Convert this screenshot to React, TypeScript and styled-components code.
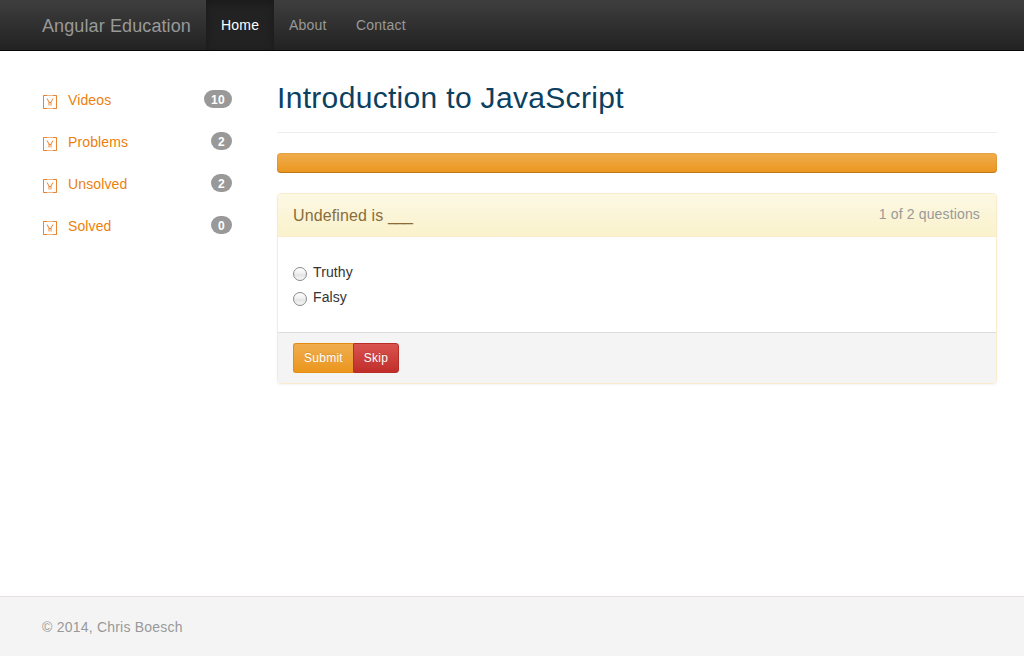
import React from 'react';
import styled, { createGlobalStyle } from 'styled-components';

const GlobalStyle = createGlobalStyle`
  *, *::before, *::after { box-sizing: border-box; }
  html, body { margin: 0; padding: 0; }
  body {
    background: #fff;
    color: #333;
    font-family: "Liberation Sans", Arial, sans-serif;
    font-size: 14px;
    line-height: 20px;
  }
`;

const Page = styled.div`
  display: flex;
  flex-direction: column;
  height: 100vh;
  overflow: hidden;
`;

const Navbar = styled.nav`
  display: flex;
  flex: none;
  height: 51px;
  padding-left: 27px;
  background: linear-gradient(to bottom, #3e3e3e 0%, #222 100%);
  border-bottom: 1px solid #080808;
`;

const Brand = styled.a`
  width: 179px;
  padding: 16px 15px 14px;
  font-size: 18px;
  white-space: nowrap;
  letter-spacing: 0.11px;
  color: #999;
`;

const NavLink = styled.a<{ $active?: boolean; $width: number }>`
  width: ${p => p.$width}px;
  padding: 15px;
  white-space: nowrap;
  letter-spacing: 0.22px;
  color: ${p => (p.$active ? '#fff' : '#999')};
  background: ${p => (p.$active ? '#222' : 'transparent')};
  box-shadow: ${p => (p.$active ? 'inset 0 3px 9px rgba(0, 0, 0, 0.25)' : 'none')};
`;

const Content = styled.div`
  display: flex;
  flex: 1;
  align-items: flex-start;
  padding: 29px 27px 0;
`;

const Sidebar = styled.ul`
  display: flex;
  flex-direction: column;
  gap: 2px;
  width: 220px;
  margin: 0 30px 0 0;
  padding: 0;
  list-style: none;
`;

const SideItem = styled.li`
  display: flex;
  align-items: flex-start;
  height: 40px;
  padding: 10px 15px;
  color: #eb7f0c;
`;

const GlyphIcon = styled.svg`
  width: 16px;
  height: 16px;
  margin: 4px 10px 0 0;
`;

const SideLabel = styled.span`
  flex: 1;
  letter-spacing: 0.12px;
`;

const Badge = styled.span`
  height: 18px;
  padding: 4px 7px 3px;
  border-radius: 10px;
  background: #999;
  color: #fff;
  font-size: 12px;
  font-weight: bold;
  line-height: 12px;
  letter-spacing: 0.3px;
  text-align: center;
`;

const Main = styled.main`
  width: 720px;
`;

const Title = styled.h1`
  margin: 0 0 20px;
  height: 53px;
  padding-top: 1px;
  border-bottom: 1px solid #eee;
  color: #0b4060;
  font-size: 30px;
  font-weight: 400;
  line-height: 33px;
  letter-spacing: 0.32px;
`;

const Progress = styled.div`
  height: 20px;
  margin-bottom: 20px;
  border-radius: 4px;
  background: linear-gradient(to bottom, #f0ad4e 0%, #eb961e 100%);
  box-shadow: inset 0 -1px 0 rgba(0, 0, 0, 0.15), inset 0 0 0 1px rgba(160, 90, 0, 0.12);
`;

const Panel = styled.section`
  border: 1px solid #faebcc;
  border-radius: 4px;
  box-shadow: 0 1px 2px rgba(0, 0, 0, 0.05);
  overflow: hidden;
`;

const PanelHead = styled.header`
  display: flex;
  justify-content: space-between;
  height: 43px;
  padding: 11px 16px 0 15px;
  border-bottom: 1px solid #faebcc;
  background: linear-gradient(to bottom, #fcf8e3 0%, #faf2cc 100%);
`;

const Question = styled.h3`
  margin: 1px 0 0;
  color: #8a6d3b;
  font-size: 16px;
  font-weight: 400;
  letter-spacing: 0.12px;
`;

const Blank = styled.span`
  letter-spacing: -0.9px;
`;

const Count = styled.span`
  margin-top: -1px;
  letter-spacing: 0.15px;
  color: #999;
`;

const PanelBody = styled.div`
  display: flex;
  flex-direction: column;
  gap: 5px;
  height: 95px;
  padding: 25px 15px;
`;

const Option = styled.label`
  display: flex;
  height: 20px;
  letter-spacing: 0.1px;
`;

const Radio = styled.input`
  appearance: none;
  flex: none;
  width: 14px;
  height: 14px;
  margin: 5px 6px 0 0;
  border: 1px solid #8a8a8a;
  border-radius: 50%;
  background: linear-gradient(to bottom, #fff 0%, #eee 50%, #e4e4e4 55%, #f6f6f6 100%);
`;

const PanelFoot = styled.footer`
  display: flex;
  height: 51px;
  padding: 10px 15px;
  border-top: 1px solid #ddd;
  background: #f4f4f4;
`;

const Button = styled.button<{ $tone: 'warning' | 'danger' }>`
  width: ${p => (p.$tone === 'warning' ? 60 : 46)}px;
  height: 30px;
  padding: 0;
  border: 1px solid ${p => (p.$tone === 'warning' ? '#e38d13' : '#b92c28')};
  border-right-width: ${p => (p.$tone === 'warning' ? 0 : 1)}px;
  border-radius: ${p => (p.$tone === 'warning' ? '3px 0 0 3px' : '0 3px 3px 0')};
  background: ${p =>
    p.$tone === 'warning'
      ? 'linear-gradient(to bottom, #f0ad4e 0%, #eb961e 100%)'
      : 'linear-gradient(to bottom, #d9534f 0%, #c12e2a 100%)'};
  color: #fff;
  font: 12px/18px "Liberation Sans", Arial, sans-serif;
  letter-spacing: 0.25px;
  text-shadow: 0 -1px 0 rgba(0, 0, 0, 0.12);
`;

const Footer = styled.footer`
  flex: none;
  height: 60px;
  padding: 20px 42px;
  border-top: 1px solid #e6e0e4;
  background: #f4f4f4;
  color: #999;
  letter-spacing: 0.22px;
`;

const sections = [
  { label: 'Videos', count: 10 },
  { label: 'Problems', count: 2 },
  { label: 'Unsolved', count: 2 },
  { label: 'Solved', count: 0 },
];

const BoxIcon = () => (
  <GlyphIcon viewBox="0 0 16 16" fill="none" stroke="#ea8433">
    <path d="M1.5 1.5H14.5V14.5H1.5Z" strokeOpacity="0.6" />
    <path d="M5 1.5H1.5V14.5H5M11 1.5H14.5V14.5H11" />
    <path d="M5 4.5L7 8V11.5M11 4.5L9 8V11.5M7 8.5H9" />
  </GlyphIcon>
);

export default function App() {
  return (
    <Page>
      <GlobalStyle />
      <Navbar>
        <Brand>Angular Education</Brand>
        <NavLink $active $width={68}>Home</NavLink>
        <NavLink $width={67}>About</NavLink>
        <NavLink $width={80}>Contact</NavLink>
      </Navbar>
      <Content>
        <Sidebar>
          {sections.map(s => (
            <SideItem key={s.label}>
              <BoxIcon />
              <SideLabel>{s.label}</SideLabel>
              <Badge>{s.count}</Badge>
            </SideItem>
          ))}
        </Sidebar>
        <Main>
          <Title>Introduction to JavaScript</Title>
          <Progress />
          <Panel>
            <PanelHead>
              <Question>Undefined is <Blank>___</Blank></Question>
              <Count>1 of 2 questions</Count>
            </PanelHead>
            <PanelBody>
              <Option><Radio type="radio" name="answer" />Truthy</Option>
              <Option><Radio type="radio" name="answer" />Falsy</Option>
            </PanelBody>
            <PanelFoot>
              <Button $tone="warning">Submit</Button>
              <Button $tone="danger">Skip</Button>
            </PanelFoot>
          </Panel>
        </Main>
      </Content>
      <Footer>© 2014, Chris Boesch</Footer>
    </Page>
  );
}
